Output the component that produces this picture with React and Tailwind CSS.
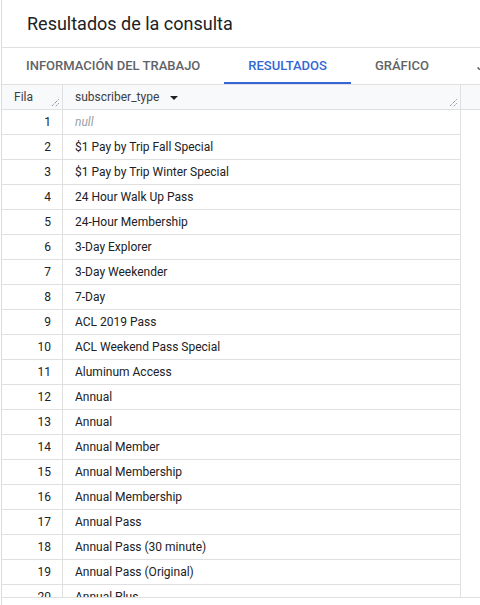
const rows = [
    null,
    '$1 Pay by Trip Fall Special',
    '$1 Pay by Trip Winter Special',
    '24 Hour Walk Up Pass',
    '24-Hour Membership',
    '3-Day Explorer',
    '3-Day Weekender',
    '7-Day',
    'ACL 2019 Pass',
    'ACL Weekend Pass Special',
    'Aluminum Access',
    'Annual',
    'Annual',
    'Annual Member',
    'Annual Membership',
    'Annual Membership',
    'Annual Pass',
    'Annual Pass (30 minute)',
    'Annual Pass (Original)',
    'Annual Plus',
];

const tabs = ['INFORMACIÓN DEL TRABAJO', 'RESULTADOS', 'GRÁFICO', 'JSON'];

function ResizeHandle() {
    return (
        <svg width="8" height="8" viewBox="0 0 8 8" className="absolute right-[3px] bottom-[2px]">
            <path d="M7.5 0.5 L0.5 7.5 M7.5 4.5 L4.5 7.5" stroke="#5f6368" strokeWidth="1" strokeDasharray="1 1" />
        </svg>
    );
}

export default function App() {
    return (
        <div className="w-[480px] h-[605px] bg-white overflow-hidden pl-px font-['Roboto',sans-serif] text-[#202124]">
            <div className="h-full border-l border-[#dadce0] flex flex-col">
                <div className="h-[48px] border-b border-[#e0e0e0] flex items-center pl-[25px] text-[18px]">
                    Resultados de la consulta
                </div>

                <div className="h-[36px] flex whitespace-nowrap">
                    {tabs.map((t) => {
                        const active = t === 'RESULTADOS';
                        return (
                            <div
                                key={t}
                                className={`relative px-6 flex items-center text-[13px] font-medium ${active ? 'text-[#3367d6]' : 'text-[#5f6368]'}`}
                            >
                                {t}
                                {active && <div className="absolute left-0 right-0 bottom-0 h-[2px] bg-[#3367d6]" />}
                            </div>
                        );
                    })}
                </div>

                <div className="h-[514px] border-t border-b border-[#e0e0e0] overflow-hidden text-[12px]">
                    <div className="flex h-[25px] bg-[#f8f9fa] border-b border-[#e0e0e0]">
                        <div className="relative w-[61px] border-r border-[#e0e0e0] flex items-center pl-[12px] text-[#3c4043]">
                            Fila
                            <ResizeHandle />
                        </div>
                        <div className="relative w-[398px] border-r border-[#e0e0e0] flex items-center pl-3 text-[#3c4043]">
                            subscriber_type
                            <svg width="8" height="4" viewBox="0 0 8 4" className="ml-[11px] mt-px">
                                <path d="M0 0 H8 L4 4 Z" fill="#202124" />
                            </svg>
                            <ResizeHandle />
                        </div>
                    </div>
                    {rows.map((r, i) => (
                        <div key={i} className="flex h-[25px]">
                            <div className="w-[61px] border-r border-b border-[#e0e0e0] flex items-center justify-end pr-[11px]">
                                {i + 1}
                            </div>
                            <div className="w-[398px] border-r border-b border-[#e0e0e0] flex items-center pl-3">
                                {r === null ? <span className="italic text-[#9aa0a6]">null</span> : r}
                            </div>
                        </div>
                    ))}
                </div>
            </div>
        </div>
    );
}
